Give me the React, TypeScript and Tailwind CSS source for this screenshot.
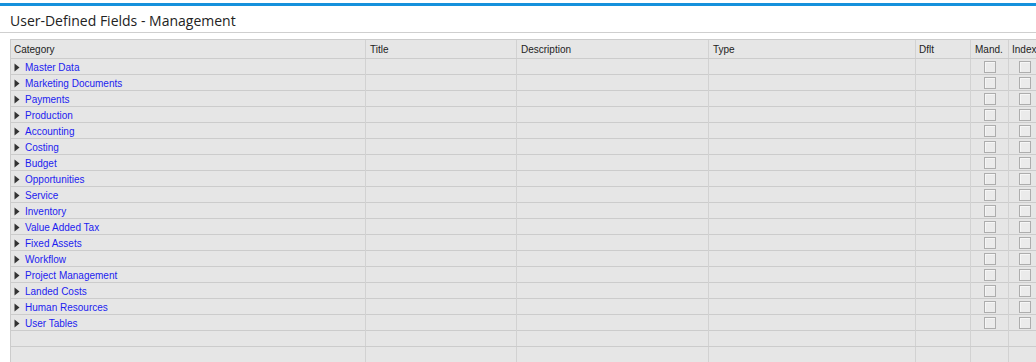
import React from "react";

// Category rows shown in the grid
const categories: string[] = [
  "Master Data",
  "Marketing Documents",
  "Payments",
  "Production",
  "Accounting",
  "Costing",
  "Budget",
  "Opportunities",
  "Service",
  "Inventory",
  "Value Added Tax",
  "Fixed Assets",
  "Workflow",
  "Project Management",
  "Landed Costs",
  "Human Resources",
  "User Tables",
];

const cols = "grid grid-cols-[355px_151px_192px_207px_55px_38px_60px]";

const Arrow: React.FC = () => (
  <svg width="6" height="9" viewBox="0 0 6 9" className="shrink-0">
    <path d="M0.5 0.5 L5.5 4.5 L0.5 8.5 Z" fill="#333333" />
  </svg>
);

const CheckBox: React.FC = () => (
  <div className="w-[12px] h-[12px] border border-[#adadad] bg-[#ebebeb] shadow-[inset_1px_1px_0_#f6f6f6]" />
);

const App: React.FC = () => {
  return (
    <div
      className="w-[1036px] h-[362px] bg-white overflow-hidden"
      style={{ fontFamily: "'Liberation Sans', Arial, sans-serif" }}
    >
      <div className="h-[3px]" />
      <div className="h-[3px] bg-[#1591dc]" />
      {/* window title */}
      <div className="h-[27px] border-b border-[#cfcfcf] flex items-center pl-[10px] pt-[2px]">
        <span
          className="text-[14px] text-[#222]"
          style={{ fontFamily: "'Open Sans', sans-serif" }}
        >
          User-Defined Fields - Management
        </span>
      </div>
      <div className="h-[6px]" />

      {/* grid */}
      <div className="ml-[10px] w-[1100px] border-t border-l border-[#cccccc] bg-[#e6e6e6] text-[10px] text-[#222]">
        <div className={`${cols} h-[19px] border-b border-[#cccccc]`}>
          <div className="border-r border-[#d2d2d2] pl-[3px] pt-[2px]">Category</div>
          <div className="border-r border-[#d2d2d2] pl-[4px] pt-[2px]">Title</div>
          <div className="border-r border-[#d2d2d2] pl-[4px] pt-[2px]">Description</div>
          <div className="border-r border-[#d2d2d2] pl-[4px] pt-[2px]">Type</div>
          <div className="border-r border-[#d2d2d2] pl-[3px] pt-[2px]">Dflt</div>
          <div className="border-r border-[#d2d2d2] pl-[4px] pt-[2px]">Mand.</div>
          <div className="pl-[3px] pt-[2px]">Index</div>
        </div>

        {categories.map((name, i) => (
          <div key={i} className={`${cols} h-[16px] border-b border-[#cccccc]`}>
            <div className="border-r border-[#d2d2d2] pl-[3px] pt-[1px] flex items-center gap-[5px]">
              <Arrow />
              <span className="text-[#1c1cf0]">{name}</span>
            </div>
            <div className="border-r border-[#d2d2d2]" />
            <div className="border-r border-[#d2d2d2]" />
            <div className="border-r border-[#d2d2d2]" />
            <div className="border-r border-[#d2d2d2]" />
            <div className="border-r border-[#d2d2d2] flex items-center justify-center pb-[1px]">
              <CheckBox />
            </div>
            <div className="flex items-center pl-[10px] pb-[1px]">
              <CheckBox />
            </div>
          </div>
        ))}

        {[0, 1].map((i) => (
          <div key={"e" + i} className={`${cols} h-[16px] border-b border-[#cccccc]`}>
            <div className="border-r border-[#d2d2d2]" />
            <div className="border-r border-[#d2d2d2]" />
            <div className="border-r border-[#d2d2d2]" />
            <div className="border-r border-[#d2d2d2]" />
            <div className="border-r border-[#d2d2d2]" />
            <div className="border-r border-[#d2d2d2]" />
            <div />
          </div>
        ))}
      </div>
    </div>
  );
};

export default App;
